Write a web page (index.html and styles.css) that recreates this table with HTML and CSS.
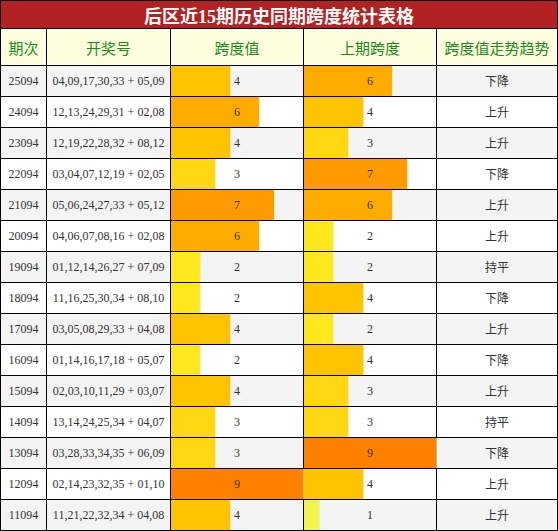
FILE: index.html
```html
<!DOCTYPE html>
<html>

<head>
  <meta http-equiv="Content-Type" content="text/html; charset=UTF-8">
  <title>后区近15期历史同期跨度统计表格</title>
  <link rel="stylesheet" href="styles.css">
</head>

<body>

  <table class="tabla">
    <colgroup>
      <col class="c-qi">
      <col class="c-num">
      <col class="c-bar">
      <col class="c-bar">
      <col class="c-trend">
    </colgroup>
    <thead>
      <tr>
        <th colspan="5" class="titulo">后区近15期历史同期跨度统计表格</th>
      </tr>
      <tr class="cabecera">
        <th>期次</th>
        <th>开奖号</th>
        <th>跨度值</th>
        <th>上期跨度</th>
        <th>跨度值走势趋势</th>
      </tr>
    </thead>
    <tbody>
      <tr>
        <td>25094</td>
        <td>04,09,17,30,33 + 05,09</td>
        <td class="bar"><div class="celda"><div class="relleno v4" style="width:44.44%"></div><span>4</span></div></td>
        <td class="bar"><div class="celda"><div class="relleno v6" style="width:66.67%"></div><span>6</span></div></td>
        <td>下降</td>
      </tr>
      <tr>
        <td>24094</td>
        <td>12,13,24,29,31 + 02,08</td>
        <td class="bar"><div class="celda"><div class="relleno v6" style="width:66.67%"></div><span>6</span></div></td>
        <td class="bar"><div class="celda"><div class="relleno v4" style="width:44.44%"></div><span>4</span></div></td>
        <td>上升</td>
      </tr>
      <tr>
        <td>23094</td>
        <td>12,19,22,28,32 + 08,12</td>
        <td class="bar"><div class="celda"><div class="relleno v4" style="width:44.44%"></div><span>4</span></div></td>
        <td class="bar"><div class="celda"><div class="relleno v3" style="width:33.33%"></div><span>3</span></div></td>
        <td>上升</td>
      </tr>
      <tr>
        <td>22094</td>
        <td>03,04,07,12,19 + 02,05</td>
        <td class="bar"><div class="celda"><div class="relleno v3" style="width:33.33%"></div><span>3</span></div></td>
        <td class="bar"><div class="celda"><div class="relleno v7" style="width:77.78%"></div><span>7</span></div></td>
        <td>下降</td>
      </tr>
      <tr>
        <td>21094</td>
        <td>05,06,24,27,33 + 05,12</td>
        <td class="bar"><div class="celda"><div class="relleno v7" style="width:77.78%"></div><span>7</span></div></td>
        <td class="bar"><div class="celda"><div class="relleno v6" style="width:66.67%"></div><span>6</span></div></td>
        <td>上升</td>
      </tr>
      <tr>
        <td>20094</td>
        <td>04,06,07,08,16 + 02,08</td>
        <td class="bar"><div class="celda"><div class="relleno v6" style="width:66.67%"></div><span>6</span></div></td>
        <td class="bar"><div class="celda"><div class="relleno v2" style="width:22.22%"></div><span>2</span></div></td>
        <td>上升</td>
      </tr>
      <tr>
        <td>19094</td>
        <td>01,12,14,26,27 + 07,09</td>
        <td class="bar"><div class="celda"><div class="relleno v2" style="width:22.22%"></div><span>2</span></div></td>
        <td class="bar"><div class="celda"><div class="relleno v2" style="width:22.22%"></div><span>2</span></div></td>
        <td>持平</td>
      </tr>
      <tr>
        <td>18094</td>
        <td>11,16,25,30,34 + 08,10</td>
        <td class="bar"><div class="celda"><div class="relleno v2" style="width:22.22%"></div><span>2</span></div></td>
        <td class="bar"><div class="celda"><div class="relleno v4" style="width:44.44%"></div><span>4</span></div></td>
        <td>下降</td>
      </tr>
      <tr>
        <td>17094</td>
        <td>03,05,08,29,33 + 04,08</td>
        <td class="bar"><div class="celda"><div class="relleno v4" style="width:44.44%"></div><span>4</span></div></td>
        <td class="bar"><div class="celda"><div class="relleno v2" style="width:22.22%"></div><span>2</span></div></td>
        <td>上升</td>
      </tr>
      <tr>
        <td>16094</td>
        <td>01,14,16,17,18 + 05,07</td>
        <td class="bar"><div class="celda"><div class="relleno v2" style="width:22.22%"></div><span>2</span></div></td>
        <td class="bar"><div class="celda"><div class="relleno v4" style="width:44.44%"></div><span>4</span></div></td>
        <td>下降</td>
      </tr>
      <tr>
        <td>15094</td>
        <td>02,03,10,11,29 + 03,07</td>
        <td class="bar"><div class="celda"><div class="relleno v4" style="width:44.44%"></div><span>4</span></div></td>
        <td class="bar"><div class="celda"><div class="relleno v3" style="width:33.33%"></div><span>3</span></div></td>
        <td>上升</td>
      </tr>
      <tr>
        <td>14094</td>
        <td>13,14,24,25,34 + 04,07</td>
        <td class="bar"><div class="celda"><div class="relleno v3" style="width:33.33%"></div><span>3</span></div></td>
        <td class="bar"><div class="celda"><div class="relleno v3" style="width:33.33%"></div><span>3</span></div></td>
        <td>持平</td>
      </tr>
      <tr>
        <td>13094</td>
        <td>03,28,33,34,35 + 06,09</td>
        <td class="bar"><div class="celda"><div class="relleno v3" style="width:33.33%"></div><span>3</span></div></td>
        <td class="bar"><div class="celda"><div class="relleno v9" style="width:100%"></div><span>9</span></div></td>
        <td>下降</td>
      </tr>
      <tr>
        <td>12094</td>
        <td>02,14,23,32,35 + 01,10</td>
        <td class="bar"><div class="celda"><div class="relleno v9" style="width:100%"></div><span>9</span></div></td>
        <td class="bar"><div class="celda"><div class="relleno v4" style="width:44.44%"></div><span>4</span></div></td>
        <td>上升</td>
      </tr>
      <tr>
        <td>11094</td>
        <td>11,21,22,32,34 + 04,08</td>
        <td class="bar"><div class="celda"><div class="relleno v4" style="width:44.44%"></div><span>4</span></div></td>
        <td class="bar"><div class="celda"><div class="relleno v1" style="width:11.11%"></div><span>1</span></div></td>
        <td>上升</td>
      </tr>
    </tbody>
  </table>

</body>

</html>
```

FILE: styles.css
```css
body {
  margin: 0;
  font-family: "Liberation Serif", "Noto Sans CJK SC", serif;
}

.tabla {
  width: 558px;
  border-collapse: collapse;
  table-layout: fixed;
  color: #333;
  font-size: 12px;
}

.c-qi {
  width: 46px;
}

.c-num {
  width: 124px;
}

.c-bar {
  width: 133px;
}

.c-trend {
  width: 121px;
}

.tabla th,
.tabla td {
  border: 1px solid #000;
  padding: 0;
  text-align: center;
}

.titulo {
  height: 27px;
  background: #b22222;
  color: #fff;
  font-size: 18px;
  font-weight: bold;
}

.cabecera th {
  height: 36px;
  background: #ffffe0;
  color: #1a8a1a;
  font-size: 15px;
  font-weight: normal;
}

.tabla tbody td {
  height: 30px;
}

.tabla tbody tr:nth-child(odd) {
  background: #f4f4f4;
}

.tabla tbody tr:nth-child(even) {
  background: #fff;
}

.celda {
  display: grid;
  height: 30px;
}

.relleno,
.celda span {
  grid-area: 1 / 1;
}

.relleno {
  justify-self: start;
  height: 100%;
  box-shadow: 1px 0 0 rgba(255, 230, 150, 0.8);
}

.celda span {
  justify-self: center;
  align-self: center;
}

.v1 { background: #f0f550; }
.v2 { background: #ffe81e; }
.v3 { background: #ffd813; }
.v4 { background: #ffc400; }
.v6 { background: #ffab00; }
.v7 { background: #ff9b00; }
.v9 { background: #ff8000; }
```
